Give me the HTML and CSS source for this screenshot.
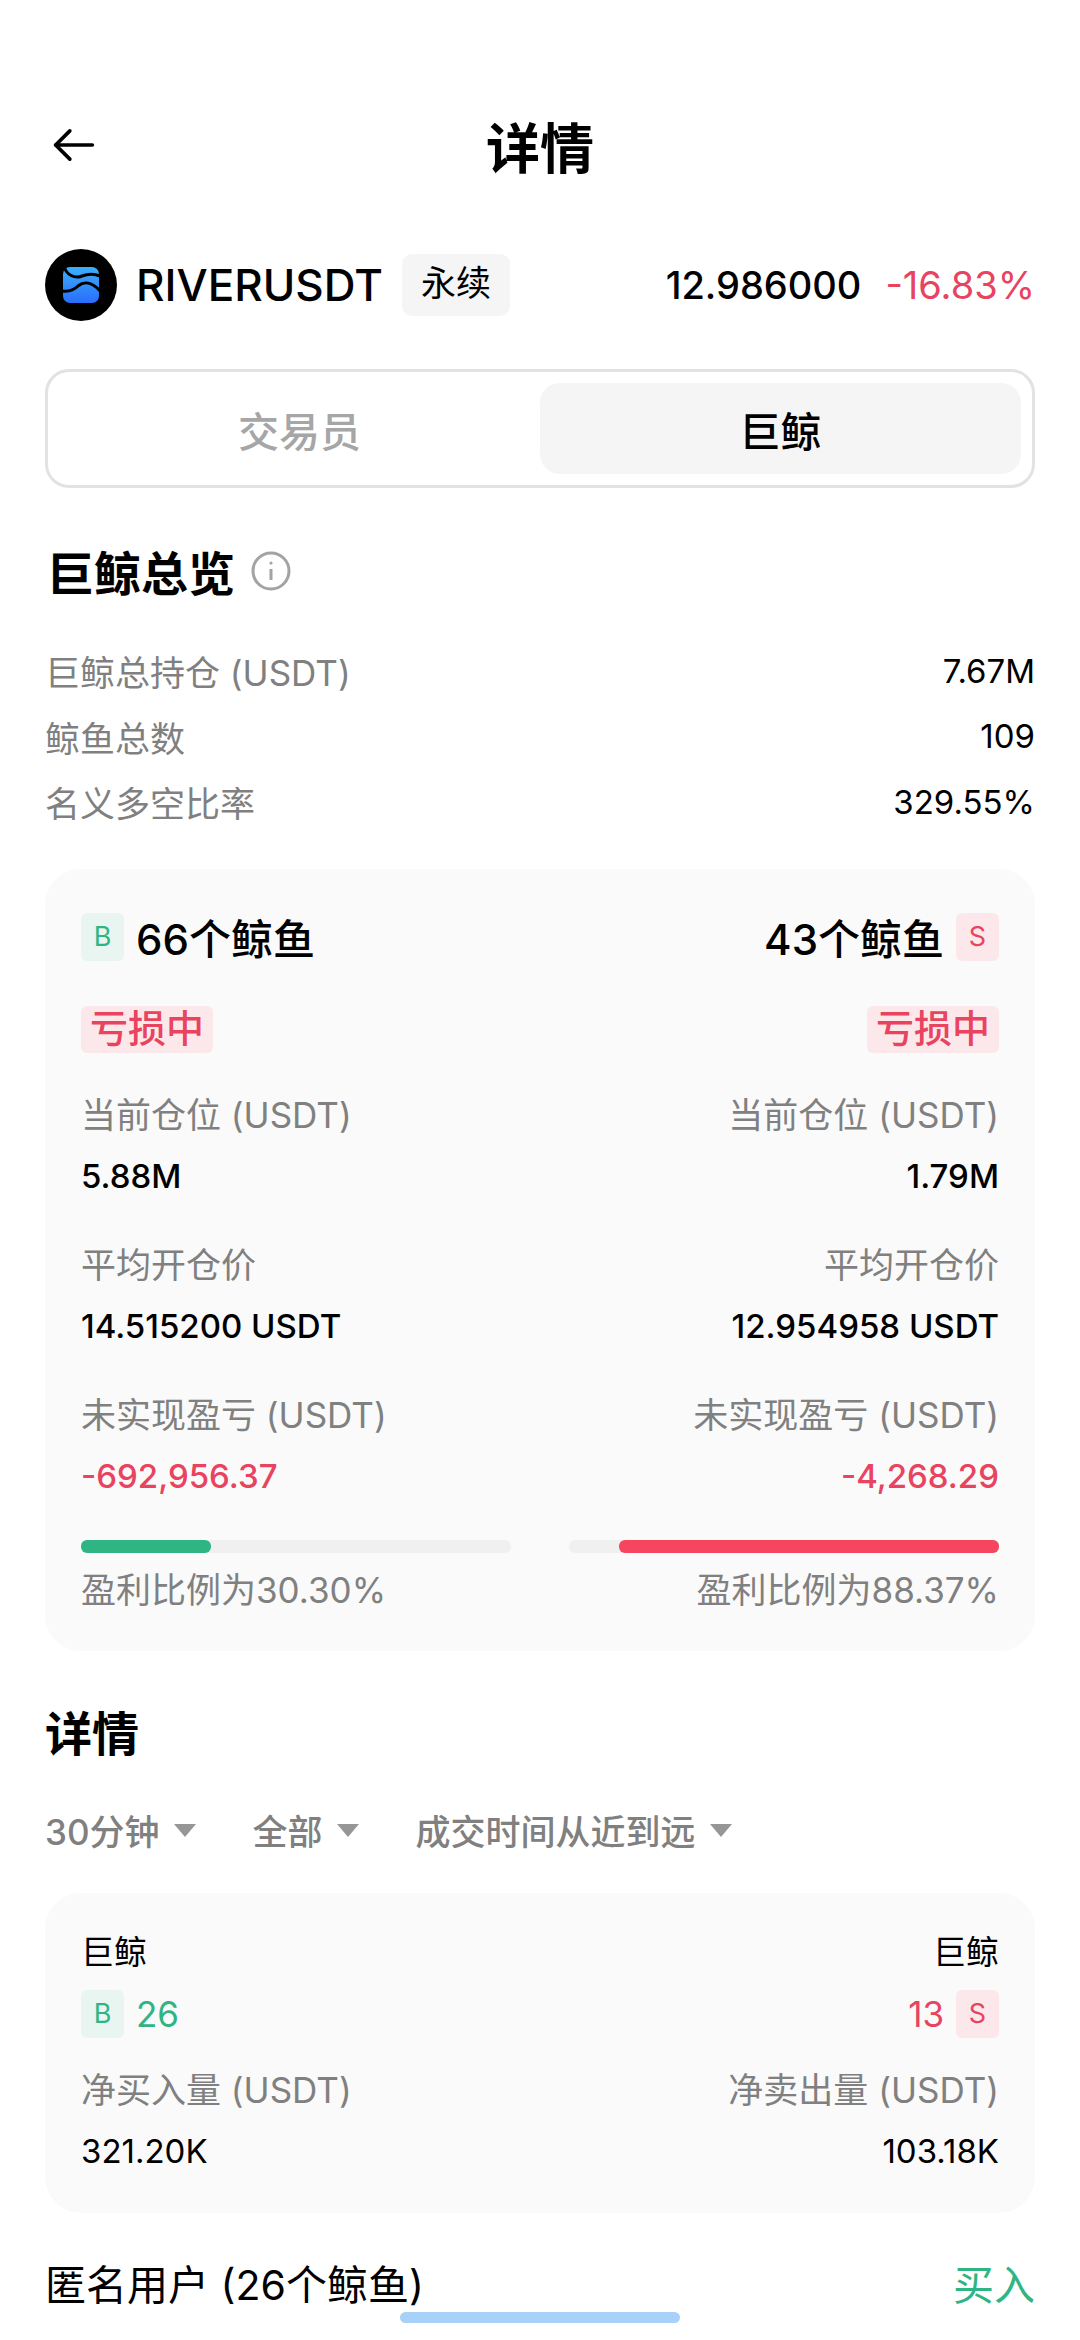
FILE: index.html
```html
<!doctype html>
<html lang="zh-CN">

<head>
    <meta charset="UTF-8">
    <meta name="viewport" content="width=device-width, initial-scale=1.0">
    <title>详情</title>
    <link rel="stylesheet" href="styles.css">
</head>

<body>
    <div class="page">
        <header class="top-bar">
            <svg class="back-icon" viewBox="0 0 48 48" fill="none" stroke="#000" stroke-width="4.4" stroke-linecap="round" stroke-linejoin="round">
                <path d="M2 24H46"/>
                <path d="M19 7L2 24L19 41"/>
            </svg>
            <h1>详情</h1>
        </header>

        <div class="symbol-row">
            <svg class="logo" viewBox="0 0 72 72">
                <defs>
                    <linearGradient id="river" x1="0" y1="0" x2="0" y2="1">
                        <stop offset="0" stop-color="#3bb0fb"/>
                        <stop offset="1" stop-color="#2a6dfb"/>
                    </linearGradient>
                </defs>
                <circle cx="36" cy="36" r="36" fill="#000"/>
                <rect x="18" y="18" width="36" height="36" rx="7" fill="url(#river)"/>
                <path d="M19 17C21 26 30 30 37 27C42 25 48 24 55 27" fill="none" stroke="#000" stroke-width="3"/>
                <path d="M17 42C24 43 29 41 33 37C39 32 47 33 55 42" fill="none" stroke="#000" stroke-width="3"/>
            </svg>
            <span class="symbol-name">RIVERUSDT</span>
            <span class="symbol-tag">永续</span>
            <span class="price">12.986000</span>
            <span class="change">-16.83%</span>
        </div>

        <div class="tabs">
            <div class="tab">交易员</div>
            <div class="tab active">巨鲸</div>
        </div>

        <div class="overview-title">
            <h2>巨鲸总览</h2>
            <svg class="info-icon" viewBox="0 0 40 40" fill="none" stroke="#a3a3a3">
                <circle cx="20" cy="20" r="18" stroke-width="3"/>
                <path d="M20 18V29" stroke-width="3"/>
                <circle cx="20" cy="12" r="1.6" fill="#a3a3a3" stroke="none"/>
            </svg>
        </div>

        <div class="stats">
            <div class="stat-row"><span>巨鲸总持仓 (USDT)</span><b>7.67M</b></div>
            <div class="stat-row"><span>鲸鱼总数</span><b>109</b></div>
            <div class="stat-row"><span>名义多空比率</span><b>329.55%</b></div>
        </div>

        <section class="card summary">
            <div class="col">
                <div class="count-row"><span class="side buy">B</span><span>66个鲸鱼</span></div>
                <div class="loss-tag">亏损中</div>
                <div class="label first">当前仓位 (USDT)</div>
                <div class="value">5.88M</div>
                <div class="label">平均开仓价</div>
                <div class="value">14.515200 USDT</div>
                <div class="label">未实现盈亏 (USDT)</div>
                <div class="value red">-692,956.37</div>
                <div class="track"><div class="fill green-fill" style="width: 30.3%"></div></div>
                <div class="ratio">盈利比例为30.30%</div>
            </div>
            <div class="col right">
                <div class="count-row"><span>43个鲸鱼</span><span class="side sell">S</span></div>
                <div class="loss-tag">亏损中</div>
                <div class="label first">当前仓位 (USDT)</div>
                <div class="value">1.79M</div>
                <div class="label">平均开仓价</div>
                <div class="value">12.954958 USDT</div>
                <div class="label">未实现盈亏 (USDT)</div>
                <div class="value red">-4,268.29</div>
                <div class="track"><div class="fill red-fill" style="width: 88.37%"></div></div>
                <div class="ratio">盈利比例为88.37%</div>
            </div>
        </section>

        <h2 class="details-title">详情</h2>

        <div class="filters">
            <span class="filter">30分钟<i class="caret"></i></span>
            <span class="filter">全部<i class="caret"></i></span>
            <span class="filter">成交时间从近到远<i class="caret"></i></span>
        </div>

        <section class="card net">
            <div class="col">
                <div class="net-name">巨鲸</div>
                <div class="net-count green"><span class="side buy small">B</span><span>26</span></div>
                <div class="label net-label">净买入量 (USDT)</div>
                <div class="value net-value">321.20K</div>
            </div>
            <div class="col right">
                <div class="net-name">巨鲸</div>
                <div class="net-count red"><span>13</span><span class="side sell small">S</span></div>
                <div class="label net-label">净卖出量 (USDT)</div>
                <div class="value net-value">103.18K</div>
            </div>
        </section>

        <div class="user-row">
            <span>匿名用户 (26个鲸鱼)</span>
            <span class="green">买入</span>
        </div>
    </div>

    <div class="home-bar"></div>
</body>

</html>
```

FILE: styles.css
```css
body {
    margin: 0;
    background-color: #fff;
    color: #000;
    font-family: 'Inter', 'Noto Sans CJK SC', sans-serif;
    width: 1080px;
    height: 2340px;
    overflow: hidden;
    position: relative;
}

h1,
h2 {
    margin: 0;
}

.page {
    padding: 100px 45px 0 45px;
}

.top-bar {
    height: 90px;
    display: flex;
    align-items: center;
    justify-content: center;
    position: relative;
}

.back-icon {
    position: absolute;
    left: 6px;
    top: 25px;
    width: 46px;
    height: 40px;
}

.top-bar h1 {
    font-size: 54px;
    font-weight: 700;
}

.symbol-row {
    margin-top: 59px;
    height: 72px;
    display: flex;
    align-items: center;
}

.logo {
    width: 72px;
    height: 72px;
    flex-shrink: 0;
}

.symbol-name {
    margin-left: 19px;
    font-size: 44px;
    font-weight: 500;
}

.symbol-tag {
    margin-left: 19px;
    width: 108px;
    height: 62px;
    line-height: 58px;
    text-align: center;
    background-color: #f5f5f5;
    border-radius: 10px;
    font-size: 35px;
}

.price {
    margin-left: auto;
    font-size: 38px;
    font-weight: 500;
}

.change {
    margin-left: 24px;
    font-size: 38px;
    color: #e8435f;
}

.tabs {
    margin-top: 48px;
    height: 119px;
    box-sizing: border-box;
    border: 3px solid #e2e2e2;
    border-radius: 24px;
    padding: 11px;
    display: flex;
}

.tab {
    flex: 1;
    display: flex;
    align-items: center;
    justify-content: center;
    border-radius: 20px;
    font-size: 41px;
    font-weight: 500;
    color: #a6a6a6;
}

.tab.active {
    background-color: #f5f5f5;
    color: #000;
}

.overview-title {
    margin-top: 50px;
    height: 65px;
    display: flex;
    align-items: center;
}

.overview-title h2 {
    font-size: 47px;
    font-weight: 700;
    margin-left: 2px;
}

.info-icon {
    margin-left: 16px;
    width: 40px;
    height: 40px;
}

.stats {
    margin-top: 35px;
}

.stat-row {
    height: 65.5px;
    display: flex;
    align-items: center;
    justify-content: space-between;
    font-size: 35px;
    color: #808080;
}

.stat-row b {
    font-weight: 400;
    font-size: 33px;
    color: #000;
}

.card {
    background-color: #fafafa;
    border-radius: 36px;
    display: flex;
    justify-content: space-between;
    padding: 0 36px;
}

.summary {
    margin-top: 34px;
    height: 782px;
    padding-top: 44px;
    box-sizing: border-box;
}

.col {
    width: 430px;
    display: flex;
    flex-direction: column;
    align-items: flex-start;
}

.col.right {
    align-items: flex-end;
}

.count-row {
    height: 48px;
    display: flex;
    align-items: center;
    gap: 12px;
    font-size: 42px;
    font-weight: 500;
}

.side {
    width: 43px;
    height: 48px;
    display: flex;
    align-items: center;
    justify-content: center;
    border-radius: 6px;
    font-size: 27px;
    font-weight: 400;
}

.side.buy {
    background-color: #e8f5f0;
    color: #2fb583;
}

.side.sell {
    background-color: #fce8ea;
    color: #e8435f;
}

.loss-tag {
    margin-top: 45px;
    width: 132px;
    height: 47px;
    line-height: 44px;
    text-align: center;
    background-color: #fce8ea;
    border-radius: 6px;
    color: #e8435f;
    font-size: 38px;
    font-weight: 500;
}

.label {
    margin-top: 41px;
    height: 48px;
    line-height: 48px;
    font-size: 35px;
    color: #808080;
}

.label.first {
    margin-top: 38px;
}

.value {
    margin-top: 13px;
    height: 48px;
    line-height: 48px;
    font-size: 33px;
    font-weight: 500;
}

.red {
    color: #e8435f;
}

.green {
    color: #2fb583;
}

.track {
    margin-top: 40px;
    width: 430px;
    height: 13px;
    border-radius: 6px;
    background-color: #f0f0f0;
    display: flex;
}

.col.right .track {
    justify-content: flex-end;
}

.fill {
    height: 13px;
    border-radius: 6px;
}

.green-fill {
    background-color: #2fb583;
}

.red-fill {
    background-color: #f6455f;
}

.ratio {
    margin-top: 13px;
    height: 48px;
    line-height: 48px;
    font-size: 35px;
    color: #808080;
}

.details-title {
    margin-top: 53px;
    height: 60px;
    line-height: 60px;
    font-size: 47px;
    font-weight: 700;
}

.filters {
    margin-top: 41px;
    height: 50px;
    display: flex;
    align-items: center;
    gap: 57px;
    font-size: 35px;
    font-weight: 500;
    color: #808080;
}

.filter {
    display: flex;
    align-items: center;
    gap: 14px;
}

.caret {
    width: 0;
    height: 0;
    border-left: 11px solid transparent;
    border-right: 11px solid transparent;
    border-top: 13px solid #969696;
    margin-top: 2px;
}

.net {
    margin-top: 38px;
    height: 320px;
    padding-top: 36px;
    box-sizing: border-box;
}

.net-name {
    height: 46px;
    line-height: 46px;
    font-size: 33px;
}

.net-count {
    margin-top: 15px;
    height: 48px;
    display: flex;
    align-items: center;
    gap: 12px;
    font-size: 35px;
}

.label.net-label {
    margin-top: 29px;
    height: 46px;
    line-height: 46px;
}

.value.net-value {
    margin-top: 15px;
    height: 46px;
    line-height: 46px;
    font-weight: 400;
}

.user-row {
    margin-top: 44px;
    height: 50px;
    display: flex;
    align-items: center;
    justify-content: space-between;
    font-size: 41px;
}

.home-bar {
    position: absolute;
    left: 400px;
    top: 2312px;
    width: 280px;
    height: 11px;
    border-radius: 6px;
    background-color: #a8d1fa;
}
```
